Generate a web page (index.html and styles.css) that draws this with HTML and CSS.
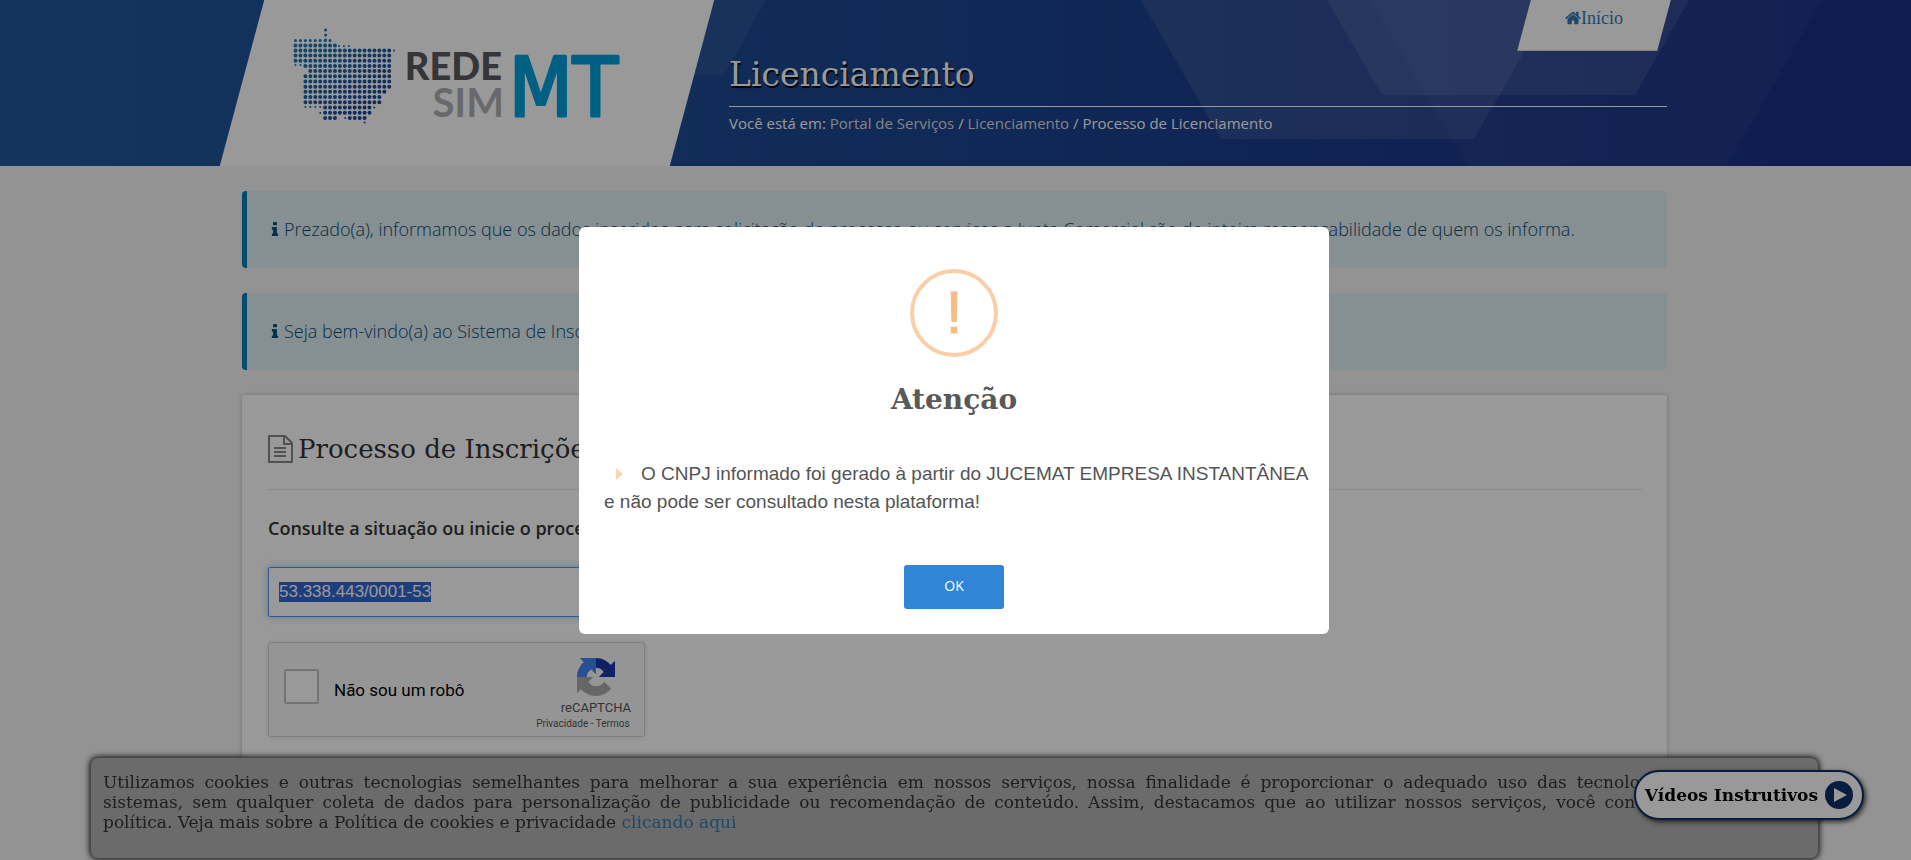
FILE: index.html
```html
<!DOCTYPE html>
<html lang="pt-BR">
<head>
<meta charset="utf-8">
<meta name="viewport" content="width=device-width, initial-scale=1">
<title>Licenciamento</title>
<link rel="stylesheet" href="styles.css">
</head>
<body>
<div class="page">
  <header class="header">
    <svg class="header-shapes" viewBox="0 0 1911 166" preserveAspectRatio="none" aria-hidden="true">
      <g fill="#fff">
        <path d="M560 0H766L724 75H600Z" opacity=".06"/>
        <path d="M1141 0L1221 139H1474L1554 0Z" opacity=".09"/>
        <path d="M1327 0L1382 95H1635L1689 0Z" opacity=".09"/>
        <path d="M1371 0L1467 166H1727L1822 0Z" opacity=".03"/>
      </g>
    </svg>
    <div class="container header-inner">
      <a class="logo" href="#" aria-label="Rede Sim MT">
        <svg class="logo-art" width="330" height="100" viewBox="0 0 330 100">
          <defs>
            <linearGradient id="dots" gradientUnits="userSpaceOnUse" x1="0" y1="10" x2="60" y2="90">
              <stop offset="0" stop-color="#1b82b9"/>
              <stop offset="1" stop-color="#1c479c"/>
            </linearGradient>
          </defs>
          <g stroke="url(#dots)" stroke-linecap="round" stroke-dasharray="0 4.93" stroke-width="4" fill="none">
            <path stroke-width="3" d="M32.6 5v.1M32.6 10v.1M2.5 15.5H38M32.6 15v.1"/>
            <path d="M2.5 20.5H42M2.5 25.5H97M2.5 30.5H97M2.5 35.7H97"/>
            <path stroke-width="2" d="M2.5 40H9M46 21H58M101 25.500v.1"/>
            <path d="M12.4 41H97M17.3 46H97M12.4 51.200H97M12.4 56.500H97M12.4 61.700H97M12.4 66.800H93M12.4 72H88M12.4 77.200H88"/>
            <path stroke-width="2" d="M12.4 82H29M81.300 82.500v.1M27.200 88v.1M71.600 97.500v.1M52.200 93v.1"/>
            <path d="M32.100 82.500H77.500M32.100 87.800H77M32.100 93H42.500M56.800 93H72"/>
          </g>
          <text class="logo-rede" x="209" y="55" text-anchor="end">REDE</text>
          <text class="logo-sim" x="211" y="92" text-anchor="end">SIM</text>
          <text class="logo-mt" x="216" y="91">MT</text>
        </svg>
      </a>
      <div class="header-main">
        <nav class="tabs"><a class="tab" href="#"><svg width="16" height="16" viewBox="0 128 1664 1536" fill="currentColor" aria-hidden="true"><path d="M1408 992v480q0 26-19 45t-45 19h-384v-384h-256v384h-384q-26 0-45-19t-19-45v-480q0-1 .5-3t.5-3l575-474 575 474q1 2 1 6zm223-69l-62 74q-8 9-21 11h-3q-13 0-21-7l-692-577-692 577q-12 8-24 7-13-2-21-11l-62-74q-8-10-7-23.500t11-21.500l719-599q32-26 76-26t76 26l244 204v-195q0-14 9-23t23-9h192q14 0 23 9t9 23v408l219 182q10 8 11 21.500t-7 23.500z"/></svg><span>Início</span></a></nav>
        <h1 class="title">Licenciamento</h1>
        <p class="crumbs">Você está em: <a href="#">Portal de Serviços</a> / <a href="#">Licenciamento</a> / Processo de Licenciamento</p>
      </div>
    </div>
  </header>

  <main class="container main">
    <p class="alert"><svg width="8" height="14" viewBox="0 128 640 1408" fill="currentColor" aria-hidden="true"><path d="M640 1344v128q0 26-19 45t-45 19h-512q-26 0-45-19t-19-45v-128q0-26 19-45t45-19h64v-384h-64q-26 0-45-19t-19-45v-128q0-26 19-45t45-19h384q26 0 45 19t19 45v576h64q26 0 45 19t19 45zm-128-1152v192q0 26-19 45t-45 19h-256q-26 0-45-19t-19-45v-192q0-26 19-45t45-19h256q26 0 45 19t19 45z"/></svg><span>Prezado(a), informamos que os dados inseridos para solicitação de processo ou serviços a Junta Comercial são de inteira responsabilidade de quem os informa.</span></p>
    <p class="alert"><svg width="8" height="14" viewBox="0 128 640 1408" fill="currentColor" aria-hidden="true"><path d="M640 1344v128q0 26-19 45t-45 19h-512q-26 0-45-19t-19-45v-128q0-26 19-45t45-19h64v-384h-64q-26 0-45-19t-19-45v-128q0-26 19-45t45-19h384q26 0 45 19t19 45v576h64q26 0 45 19t19 45zm-128-1152v192q0 26-19 45t-45 19h-256q-26 0-45-19t-19-45v-192q0-26 19-45t45-19h256q26 0 45 19t19 45z"/></svg><span>Seja bem-vindo(a) ao Sistema de Inscrições</span></p>

    <section class="card">
      <h2 class="card-title"><svg width="25" height="28" viewBox="0 0 25 28" fill="none" stroke="currentColor" stroke-width="2" stroke-linejoin="round" aria-hidden="true"><path d="M1 1H17L24 8V27H1Z"/><path d="M16 1V9H24"/><path d="M6 13H18M6 17H18M6 21H18"/></svg><span>Processo de Inscrições</span></h2>
      <form class="form">
        <label class="label" for="cnpj">Consulte a situação ou inicie o processo</label>
        <input class="field" id="cnpj" type="text" value="53.338.443/0001-53" autofocus>
        <div class="captcha">
          <input class="captcha-box" id="robot" type="checkbox">
          <label class="captcha-label" for="robot">Não sou um robô</label>
          <div class="captcha-brand">
            <svg width="38" height="38" viewBox="0 0 64 64" aria-hidden="true">
              <path fill="#1c3aa9" d="M64 31.955l-.033-1.370V4.687l-7.160 7.160C50.948 4.674 42.033.093 32.050.093c-10.400 0-19.622 4.960-25.458 12.640l11.736 11.860a15.550 15.550 0 0 1 4.754-5.334c2.050-1.600 4.952-2.906 8.968-2.906.485 0 .860.057 1.135.163 4.976.393 9.288 3.140 11.828 7.124l-8.307 8.307L64 31.953"/>
              <path fill="#4285f4" d="M31.862.094l-1.370.033H4.594l7.160 7.160C4.580 13.147 0 22.060 0 32.046c0 10.400 4.960 19.622 12.640 25.458L24.500 45.768a15.550 15.550 0 0 1-5.334-4.754c-1.600-2.050-2.906-4.952-2.906-8.968 0-.485.057-.860.163-1.135.393-4.976 3.140-9.288 7.124-11.828l8.307 8.307L31.860.095"/>
              <path fill="#ababab" d="M.001 32.045l.033 1.370v25.898l7.160-7.160c5.860 7.173 14.774 11.754 24.760 11.754 10.400 0 19.622-4.960 25.458-12.640l-11.736-11.860a15.550 15.550 0 0 1-4.754 5.334c-2.050 1.600-4.952 2.906-8.968 2.906-.485 0-.860-.057-1.135-.163-4.976-.393-9.288-3.140-11.828-7.124l8.307-8.307c-10.522.040-22.400.066-27.295-.005"/>
            </svg>
            <span class="captcha-name">reCAPTCHA</span>
            <span class="captcha-links"><a href="#">Privacidade</a> - <a href="#">Termos</a></span>
          </div>
        </div>
      </form>
    </section>
  </main>
</div>

<aside class="cookies">
  <p><span class="full-line">Utilizamos cookies e outras tecnologias semelhantes para melhorar a sua experiência em nossos serviços, nossa finalidade é proporcionar o adequado uso das tecnologias aplicadas nos</span> <span class="full-line">sistemas, sem qualquer coleta de dados para personalização de publicidade ou recomendação de conteúdo. Assim, destacamos que ao utilizar nossos serviços, você concorda com a nossa</span> política. Veja mais sobre a Política de cookies e privacidade <a href="#">clicando aqui</a></p>
</aside>
<button class="videos" type="button"><span>Vídeos Instrutivos</span><svg width="28" height="28" viewBox="0 0 28 28" aria-hidden="true"><circle cx="14" cy="14" r="14" fill="#0b3166"/><path d="M9 7L22 14L9 21Z" fill="#fff"/></svg></button>

<div class="overlay">
  <div class="modal" role="alertdialog" aria-modal="true" aria-labelledby="modal-title">
    <div class="modal-icon" aria-hidden="true">!</div>
    <h2 class="modal-title" id="modal-title">Atenção</h2>
    <p class="modal-text"><svg width="7" height="12" viewBox="0 0 7 12" aria-hidden="true"><path d="M0 0L7 6L0 12Z" fill="#fbd5b1"/></svg>O CNPJ informado foi gerado à partir do JUCEMAT EMPRESA INSTANTÂNEA e não pode ser consultado nesta plataforma!</p>
    <button class="modal-ok" type="button">OK</button>
  </div>
</div>
<script src="script.js"></script>
</body>
</html>
```
FILE: styles.css
```css
* { box-sizing: border-box; }

:root {
  --slab: "DejaVu Serif", serif;
  --sans: "Open Sans", sans-serif;
  --arial: "Liberation Sans", sans-serif;
}

body {
  margin: 0;
  background: #f5f5f5;
  font-family: var(--sans);
  color: #333;
}

h1, h2, p { margin: 0; }
a { text-decoration: none; color: #337ab7; }

.page {
  min-height: 100vh;
  display: flex;
  flex-direction: column;
}

.container {
  width: 100%;
  max-width: 1427px;
  margin: 0 auto;
}

/* Header */
.header {
  position: relative;
  height: 166px;
  overflow: hidden;
  background: linear-gradient(90deg, #20599c, #1c4590 50%, #1b2d83);
}
.header-shapes {
  position: absolute;
  inset: 0;
  width: 100%;
  height: 100%;
}
.header-inner {
  position: relative;
  display: flex;
  gap: 37px;
  height: 100%;
  padding-right: 2px;
}
.logo {
  position: relative;
  flex: 0 0 450px;
  padding: 25px 0 0 51px;
}
.logo::before, .tab::before {
  content: "";
  position: absolute;
  inset: 0;
  background: #fff;
  transform: skewX(-15deg);
}
.logo-art {
  position: relative;
  display: block;
  overflow: visible;
}
.logo-rede { font: 900 38px Lato, sans-serif; fill: #5a5b5e; }
.logo-sim { font: bold 40px Lato, sans-serif; fill: #b0b0b3; }
.logo-mt {
  font: 82px "DejaVu Sans Condensed", "DejaVu Sans", sans-serif;
  fill: #00a0dd;
  stroke: #00a0dd;
  stroke-width: 3px;
  stroke-linejoin: round;
}
.header-main {
  flex: 1;
  display: flex;
  flex-direction: column;
}
.tabs {
  display: flex;
  justify-content: flex-end;
  padding-right: 3px;
}
.tab {
  position: relative;
  display: flex;
  justify-content: center;
  width: 140px;
  height: 51px;
  padding-top: 8px;
  font: 18px/20px "Liberation Serif", serif;
}
.tab::before { border-bottom: 1px solid #ddd; }
.tab svg { position: relative; margin-top: 2px; }
.tab span { position: relative; }
.title {
  padding-bottom: 7px;
  border-bottom: 1px solid #fff;
  font: 33px/48px var(--slab);
  color: #fff;
  text-shadow: 1px 2px 1px #000;
}
.crumbs {
  padding-top: 5px;
  font-size: 15px;
  line-height: 22px;
  color: #fff;
}
.crumbs a { color: #ddd; }

/* Content */
.main {
  flex: 1;
  display: flex;
  flex-direction: column;
  gap: 25px;
  padding: 25px 2px 10px 0;
}
.alert {
  display: flex;
  align-items: center;
  gap: 5px;
  min-height: 77px;
  padding: 0 24px 2px;
  border-left: 5px solid #007bbd;
  border-radius: 4px;
  background: #e0eef3;
  color: #0c4a72;
  font-size: 18px;
  font-weight: 300;
}
.alert svg { color: #06527f; }
.card {
  flex: 1;
  padding: 25px 25px 25px 26px;
  border-radius: 2px;
  background: #fff;
  box-shadow: 0 0 4px rgba(0, 0, 0, .25);
}
.card-title {
  display: flex;
  align-items: center;
  gap: 5px;
  padding: 6px 0 17px;
  margin-bottom: 25px;
  border-bottom: 1px solid #e8e8e8;
  font: 26px/46px var(--slab);
}
.card-title svg { color: #888; }
.form {
  display: flex;
  flex-direction: column;
  align-items: flex-start;
}
.label {
  font-size: 18px;
  font-weight: 600;
  line-height: 26px;
}
.field {
  width: 100%;
  max-width: 675px;
  height: 50px;
  margin: 26px 0 25px;
  padding: 0 10px;
  border: 1px solid #5a92ea;
  border-radius: 2px;
  outline: none;
  box-shadow: 0 0 8px rgba(102, 175, 233, .6);
  background: #fff;
  font: 17px var(--arial);
  color: #555;
}
.field::selection { background: #3367d1; color: #fff; }
.captcha {
  display: flex;
  align-items: center;
  width: 377px;
  height: 95px;
  padding: 0 13px 0 15px;
  border: 1px solid #d3d3d3;
  border-radius: 3px;
  background: #f9f9f9;
  box-shadow: 0 0 4px rgba(0, 0, 0, .1);
  font-family: Roboto, sans-serif;
}
.captcha-box {
  appearance: none;
  width: 35px;
  height: 35px;
  margin: 0 15px 6px 0;
  border: 2px solid #c1c1c1;
  border-radius: 2px;
  background: #fff;
}
.captcha-label { flex: 1; font-size: 17px; color: #000; }
.captcha-brand {
  display: flex;
  flex-direction: column;
  align-items: center;
  padding-top: 6px;
  color: #555;
}
.captcha-brand svg, .captcha-name { margin-left: 26px; }
.captcha-name { font-size: 13px; line-height: 24px; }
.captcha-links { font-size: 10px; line-height: 8px; }
.captcha-links a { color: #555; }

/* Fixed bars */
.cookies {
  position: fixed;
  left: 90px;
  right: 92px;
  bottom: 1px;
  min-height: 102px;
  padding: 14px 12px;
  border: 1px solid #777;
  border-radius: 8px;
  background: #b2b2b2;
  box-shadow: 0 0 6px #000;
  font: 17px/20px var(--slab);
  color: #333;
  text-align: justify;
}
.full-line {
  display: block;
  text-align-last: justify;
}
.videos {
  position: fixed;
  right: 47px;
  bottom: 40px;
  display: flex;
  align-items: center;
  gap: 7px;
  height: 50px;
  padding: 0 9px;
  border: 2px solid #0b3166;
  border-radius: 25px;
  background: #fff;
  box-shadow: 2px 2px 5px rgba(0, 0, 0, .7);
  font: bold 17px var(--slab);
  color: #000;
}

/* Dialog */
.overlay {
  position: fixed;
  inset: 0;
  display: flex;
  align-items: center;
  justify-content: center;
  padding: 0 3px 0 0;
  background: rgba(0, 0, 0, .4);
}
.modal {
  display: flex;
  flex-direction: column;
  align-items: center;
  width: 750px;
  padding: 42px 25px 25px;
  border-radius: 6px;
  background: #fff;
}
.modal-icon {
  width: 88px;
  height: 88px;
  border: 4px solid #facea8;
  border-radius: 50%;
  font: 60px/80px var(--arial);
  text-align: center;
  color: #f8bb86;
  -webkit-text-stroke: 1px #f8bb86;
}
.modal-title {
  padding: 21px 0;
  font: bold 28px/44px var(--slab);
  color: #595959;
}
.modal-text {
  align-self: stretch;
  margin-right: -10px;
  padding: 17px 0 49px;
  font: 19px/28px var(--arial);
  color: #545454;
}
.modal-text svg { margin: 0 18px 0 12px; }
.modal-ok {
  width: 100px;
  height: 44px;
  padding-bottom: 3px;
  border: 0;
  border-radius: 3px;
  background: #3085d6;
  color: #fff;
  font: 500 14px var(--sans);
}
```
FILE: script.js
```js
const field = document.getElementById('cnpj');
field.focus();
field.select();
```
